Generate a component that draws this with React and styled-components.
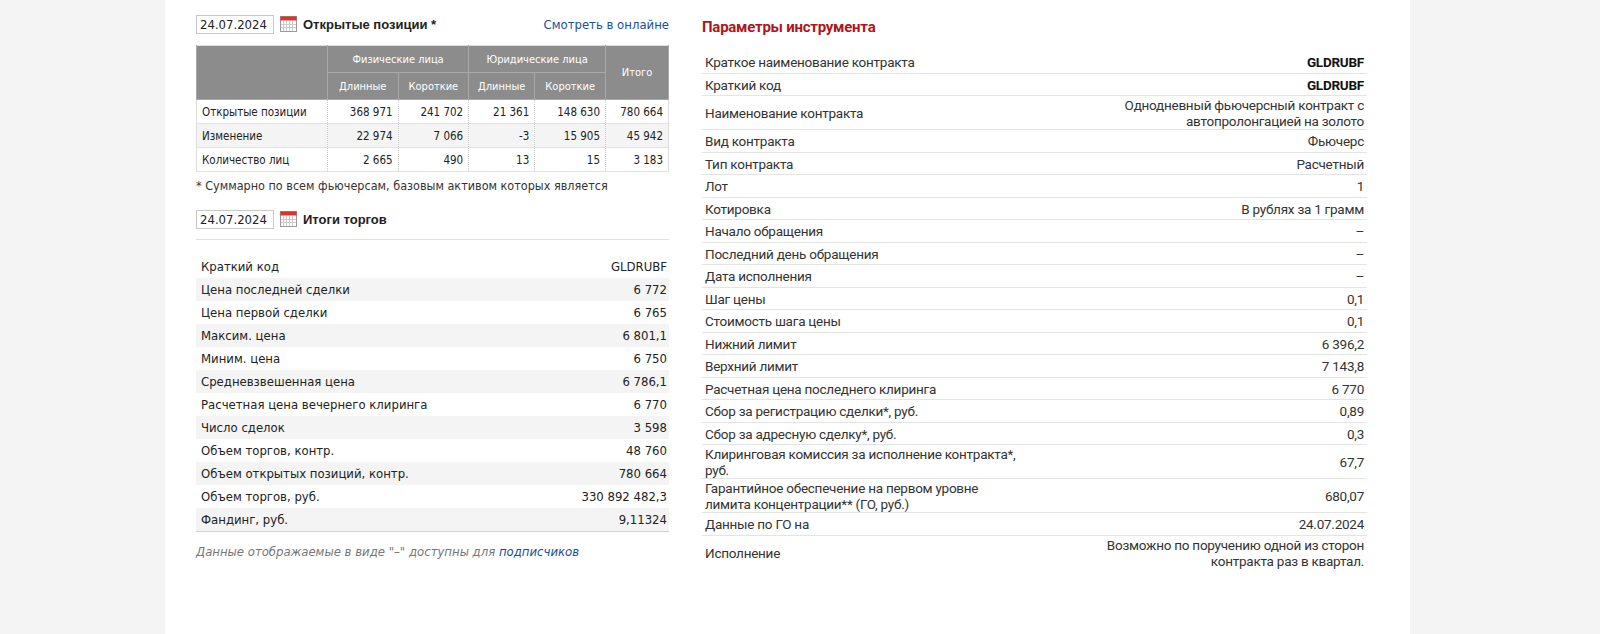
import React from 'react'
import styled, { createGlobalStyle } from 'styled-components'

const Global = createGlobalStyle`
  body { margin: 0; background: #f4f4f4; font-family: "DejaVu Sans Condensed", "DejaVu Sans", sans-serif; color: #222; }
`

const Page = styled.div`
  width: 1245px;
  margin-left: 165px;
  min-height: 634px;
  background: #fff;
  display: flex;
  gap: 33px;
  padding: 12px 0 0 31px;
  box-sizing: border-box;
`

const Left = styled.div`
  width: 473px;
  display: flex;
  flex-direction: column;
`

const Right = styled.div`
  width: 665px;
  font-family: Roboto, "Liberation Sans", sans-serif;
  font-size: 13.5px;
  color: #333;
  letter-spacing: -0.25px;
`

const HeadLine = styled.div`
  display: flex;
  align-items: center;
  gap: 6px;
  height: 24px;
  margin-bottom: ${p => p.$mb || 0}px;
`

const DateBox = styled.div`
  border: 1px solid #c8c8c8;
  padding: 1px 3px;
  font-size: 13px;
  font-family: "DejaVu Sans Condensed", sans-serif;
  width: 70px;
`

const Title = styled.div`
  font-weight: bold;
  font-size: 13px;
  font-family: "Liberation Sans", Arial, sans-serif;
  flex: 1;
`

const Link = styled.a`
  color: #1a4f9c;
  font-size: 13px;
  text-decoration: none;
  font-family: "DejaVu Sans Condensed", sans-serif;
`

const Table = styled.table`
  border-collapse: collapse;
  width: 473px;
  font-size: 11.5px;
  border: 1px solid #ddd;
`

const Th = styled.th`
  background: #8c8c8c;
  color: #fff;
  font-weight: normal;
  font-size: 11px;
  height: 24px;
  border: 1px solid #a8a8a8;
  border-top: none;
  text-align: center;
`

const Td = styled.td`
  height: 23px;
  padding: 0 5px;
  text-align: ${p => (p.$left ? 'left' : 'right')};
  border-right: 1px dotted #ccc;
  border-bottom: 1px solid #e2e2e2;
  background: ${p => (p.$alt ? '#f4f4f4' : '#fff')};
`

const Note = styled.div`
  font-size: 12.5px;
  margin: 6px 0 14px;
  color: #333;
`

const Summary = styled.div`
  margin-top: 8px;
  border-top: 1px solid #e0e0e0;
  padding-top: 15px;
  border-bottom: 1px solid #d0d0d0;
  font-size: 13px;
`

const SRow = styled.div`
  display: flex;
  justify-content: space-between;
  height: 23px;
  align-items: center;
  padding: 0 2px 0 5px;
  background: ${p => (p.$alt ? '#f4f4f4' : '#fff')};
`

const Foot = styled.div`
  font-style: italic;
  color: #777;
  font-size: 13px;
  margin-top: 12px;
  a { color: #1a4f9c; text-decoration: none; }
`

const RTitle = styled.div`
  color: #b0141c;
  font-weight: bold;
  font-size: 15px;
  height: 39px;
  padding-top: 6px;
  box-sizing: border-box;
`

const PRow = styled.div`
  display: flex;
  justify-content: space-between;
  align-items: center;
  gap: 20px;
  min-height: 22.5px;
  padding: 1px 3px 0;
  box-sizing: border-box;
  line-height: 16px;
  border-bottom: ${p => (p.$last ? 'none' : '1px solid #e4e4e4')};
`

const PLabel = styled.div`
  max-width: 320px;
`

const PValue = styled.div`
  text-align: right;
  font-weight: ${p => (p.$bold ? 'bold' : 'normal')};
  color: ${p => (p.$bold ? '#111' : '#333')};
  max-width: 290px;
  align-self: ${p => (p.$top ? 'flex-start' : 'center')};
`

const Cal = () => (
  <svg width="17" height="16" viewBox="0 0 17 16">
    <rect x="0.5" y="0.5" width="16" height="15" fill="#fff" stroke="#999" />
    <rect x="0.5" y="0.5" width="16" height="4" fill="#d9342b" />
    {[3, 6, 9, 12].map(x => <line key={x} x1={x + 0.5} y1="5" x2={x + 0.5} y2="15" stroke="#ccc" />)}
    {[8, 11].map(y => <line key={y} x1="1" y1={y + 0.5} x2="16" y2={y + 0.5} stroke="#ccc" />)}
  </svg>
)

const oi = [
  ['Открытые позиции', '368 971', '241 702', '21 361', '148 630', '780 664'],
  ['Изменение', '22 974', '7 066', '-3', '15 905', '45 942'],
  ['Количество лиц', '2 665', '490', '13', '15', '3 183'],
]

const summary = [
  ['Краткий код', 'GLDRUBF'],
  ['Цена последней сделки', '6 772'],
  ['Цена первой сделки', '6 765'],
  ['Максим. цена', '6 801,1'],
  ['Миним. цена', '6 750'],
  ['Средневзвешенная цена', '6 786,1'],
  ['Расчетная цена вечернего клиринга', '6 770'],
  ['Число сделок', '3 598'],
  ['Объем торгов, контр.', '48 760'],
  ['Объем открытых позиций, контр.', '780 664'],
  ['Объем торгов, руб.', '330 892 482,3'],
  ['Фандинг, руб.', '9,11324'],
]

const params = [
  ['Краткое наименование контракта', 'GLDRUBF', true],
  ['Краткий код', 'GLDRUBF', true],
  ['Наименование контракта', 'Однодневный фьючерсный контракт с автопролонгацией на золото'],
  ['Вид контракта', 'Фьючерс'],
  ['Тип контракта', 'Расчетный'],
  ['Лот', '1'],
  ['Котировка', 'В рублях за 1 грамм'],
  ['Начало обращения', '–'],
  ['Последний день обращения', '–'],
  ['Дата исполнения', '–'],
  ['Шаг цены', '0,1'],
  ['Стоимость шага цены', '0,1'],
  ['Нижний лимит', '6 396,2'],
  ['Верхний лимит', '7 143,8'],
  ['Расчетная цена последнего клиринга', '6 770'],
  ['Сбор за регистрацию сделки*, руб.', '0,89'],
  ['Сбор за адресную сделку*, руб.', '0,3'],
  ['Клиринговая комиссия за исполнение контракта*, руб.', '67,7'],
  ['Гарантийное обеспечение на первом уровне лимита концентрации** (ГО, руб.)', '680,07'],
  ['Данные по ГО на', '24.07.2024'],
  ['Исполнение', 'Возможно по поручению одной из сторон контракта раз в квартал.'],
]

export default function App() {
  return (
    <>
      <Global />
      <Page>
        <Left>
          <HeadLine $mb={9}>
            <DateBox>24.07.2024</DateBox>
            <Cal />
            <Title>Открытые позиции *</Title>
            <Link href="#">Смотреть в онлайне</Link>
          </HeadLine>
          <Table>
            <thead>
              <tr>
                <Th rowSpan={2} style={{ width: 128 }} />
                <Th colSpan={2}>Физические лица</Th>
                <Th colSpan={2}>Юридические лица</Th>
                <Th rowSpan={2} style={{ width: 60 }}>Итого</Th>
              </tr>
              <tr>
                <Th>Длинные</Th>
                <Th>Короткие</Th>
                <Th>Длинные</Th>
                <Th>Короткие</Th>
              </tr>
            </thead>
            <tbody>
              {oi.map((r, i) => (
                <tr key={r[0]}>
                  {r.map((c, j) => (
                    <Td key={j} $left={j === 0} $alt={i === 1}>{c}</Td>
                  ))}
                </tr>
              ))}
            </tbody>
          </Table>
          <Note>* Суммарно по всем фьючерсам, базовым активом которых является</Note>
          <HeadLine>
            <DateBox>24.07.2024</DateBox>
            <Cal />
            <Title>Итоги торгов</Title>
          </HeadLine>
          <Summary>
            {summary.map((r, i) => (
              <SRow key={r[0]} $alt={i % 2 === 1}>
                <span>{r[0]}</span>
                <span>{r[1]}</span>
              </SRow>
            ))}
          </Summary>
          <Foot>
            Данные отображаемые в виде "–" доступны для <a href="#">подписчиков</a>
          </Foot>
        </Left>
        <Right>
          <RTitle>Параметры инструмента</RTitle>
          {params.map((r, i) => (
            <PRow key={r[0]} $last={i === params.length - 1}>
              <PLabel>{r[0]}</PLabel>
              <PValue $bold={r[2]} $top={i === params.length - 1}>{r[1]}</PValue>
            </PRow>
          ))}
        </Right>
      </Page>
    </>
  )
}
